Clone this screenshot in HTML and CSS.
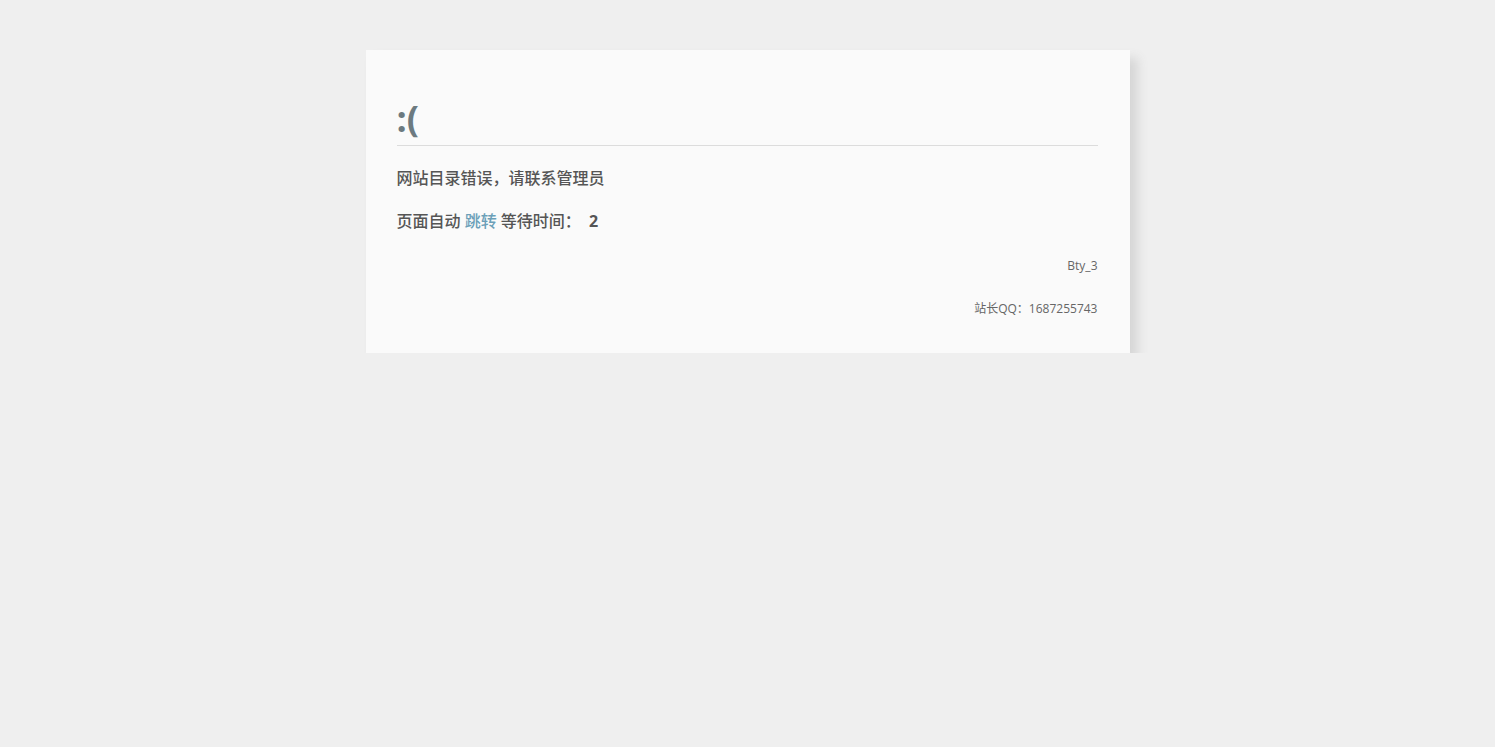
FILE: index.html
```html
<!DOCTYPE html>
<html lang="zh-CN">
<head>
<meta charset="utf-8" />
<title>跳转提示</title>
<link rel="stylesheet" href="styles.css">
</head>
<body>
<section class="system-message">
  <h1 class="face">:(</h1>
  <p class="error">网站目录错误，请联系管理员</p>
  <p class="jump">页面自动 <a id="href" href="#">跳转</a> 等待时间： <b id="wait">2</b></p>
  <p class="note">Bty_3</p>
  <p class="note">站长QQ：1687255743</p>
</section>
</body>
</html>
```
FILE: styles.css
```css
body {
  margin: 0;
  padding: 50px 0 0;
  background: #efefef;
  font-family: "Open Sans", "Noto Sans CJK SC", sans-serif;
  color: #333;
}

.system-message {
  width: 701px;
  margin: 0 auto;
  padding: 24px 32px 33px 31px;
  background: #fafafa;
  box-shadow: 8px 8px 10px #d6d6d6;
}

.face {
  margin: 0;
  padding: 25px 0 6px;
  font-size: 36px;
  line-height: 40px;
  font-weight: 700;
  color: #6c7a80;
  border-bottom: 1px solid #dcdcdc;
}

.error,
.jump {
  margin: 20px 0 0;
  font-size: 16px;
  line-height: 23px;
  font-weight: 500;
  color: #555;
}

.error {
  margin-top: 21px;
}

.jump a {
  color: #6b9fb8;
  text-decoration: none;
}

.jump b {
  margin-left: 4px;
  font-weight: 700;
}

.note {
  margin: 20px 0 0;
  text-align: right;
  font-size: 12px;
  line-height: 23px;
  color: #666;
}

.jump + .note {
  margin-top: 21px;
}
```
